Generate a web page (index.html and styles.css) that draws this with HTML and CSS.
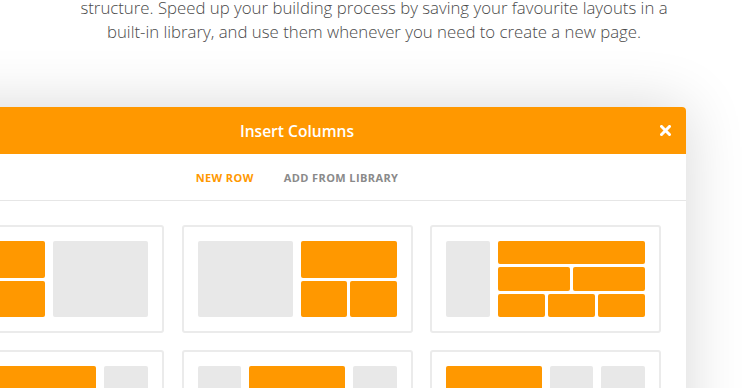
FILE: index.html
```html
<!DOCTYPE html>
<html>
<head>
    <title>Insert Columns</title>
    <link rel="stylesheet" href="styles.css">
</head>
<body>
    <p class="intro">structure. Speed up your building process by saving your favourite layouts in a built-in library, and use them whenever you need to create a new page.</p>

    <div class="modal">
        <div class="modal-header">
            <span class="modal-title">Insert Columns</span>
            <svg class="close" width="11" height="11" viewBox="0 0 11 11">
                <path d="M1.5 1.5 L9.5 9.5 M9.5 1.5 L1.5 9.5" stroke="#fff" stroke-width="3" stroke-linecap="square"/>
            </svg>
        </div>

        <div class="tabs">
            <span class="tab active">New Row</span>
            <span class="tab">Add From Library</span>
        </div>

        <div class="layouts">
            <!-- half stacked + half -->
            <div class="card">
                <div class="cols">
                    <div class="stack span-2">
                        <div class="block orange"></div>
                        <div class="block orange"></div>
                    </div>
                    <div class="block gray span-2"></div>
                </div>
            </div>

            <!-- half + half split -->
            <div class="card">
                <div class="cols">
                    <div class="block gray span-2"></div>
                    <div class="stack span-2">
                        <div class="block orange"></div>
                        <div class="row">
                            <div class="block orange"></div>
                            <div class="block orange"></div>
                        </div>
                    </div>
                </div>
            </div>

            <!-- quarter + three tiers -->
            <div class="card">
                <div class="cols">
                    <div class="block gray"></div>
                    <div class="stack span-3">
                        <div class="block orange"></div>
                        <div class="row">
                            <div class="block orange"></div>
                            <div class="block orange"></div>
                        </div>
                        <div class="row">
                            <div class="block orange"></div>
                            <div class="block orange"></div>
                            <div class="block orange"></div>
                        </div>
                    </div>
                </div>
            </div>

            <div class="card">
                <div class="cols">
                    <div class="block orange span-3"></div>
                    <div class="block gray"></div>
                </div>
            </div>

            <div class="card">
                <div class="cols">
                    <div class="block gray"></div>
                    <div class="block orange span-2"></div>
                    <div class="block gray"></div>
                </div>
            </div>

            <div class="card">
                <div class="cols">
                    <div class="block orange span-2"></div>
                    <div class="block gray"></div>
                    <div class="block gray"></div>
                </div>
            </div>
        </div>
    </div>
</body>
</html>
```

FILE: styles.css
```css
body {
    margin: 0;
    background-color: #ffffff;
    font-family: "Open Sans", Arial, sans-serif;
    overflow: hidden;
}

.intro {
    width: 610px;
    margin: -4px auto 0;
    font-size: 16.8px;
    font-weight: 300;
    line-height: 24px;
    color: #4a4a4a;
    text-align: center;
}

.modal {
    width: 778px;
    margin: 63px 0 0 -92px;
    background-color: #ffffff;
    border-radius: 4px 4px 0 0;
    box-shadow: 0 0 60px rgba(0,0,0,0.16);
}

.modal-header {
    position: relative;
    height: 47px;
    display: flex;
    align-items: center;
    justify-content: center;
    background-color: #ff9800;
    border-radius: 4px 4px 0 0;
}

.modal-title {
    color: #ffffff;
    font-size: 15.6px;
    font-weight: 600;
}

.close {
    position: absolute;
    right: 15px;
    top: 18px;
}

.tabs {
    height: 46px;
    display: flex;
    align-items: center;
    justify-content: center;
    gap: 30px;
    border-bottom: 1px solid #e6e6e6;
}

.tab {
    font-size: 11px;
    font-weight: 700;
    letter-spacing: 0.4px;
    text-transform: uppercase;
    color: #8a8a8a;
}

.tab.active {
    color: #ff9800;
}

.layouts {
    display: grid;
    grid-template-columns: repeat(3, 1fr);
    gap: 17px 17.5px;
    padding: 24px 25px;
}

.card {
    border: 2px solid #ebebeb;
    border-radius: 3px;
    padding: 14px;
}

.cols {
    display: grid;
    grid-template-columns: repeat(4, 1fr);
    gap: 8px;
    height: 76px;
}

.span-2 {
    grid-column: span 2;
}

.span-3 {
    grid-column: span 3;
}

.stack {
    display: flex;
    flex-direction: column;
    gap: 3px;
}

.stack > * {
    flex: 1;
}

.row {
    display: flex;
    gap: 3px;
}

.row > * {
    flex: 1;
}

.block {
    border-radius: 2px;
}

.block.orange {
    background-color: #ff9800;
}

.block.gray {
    background-color: #e8e8e8;
}
```
